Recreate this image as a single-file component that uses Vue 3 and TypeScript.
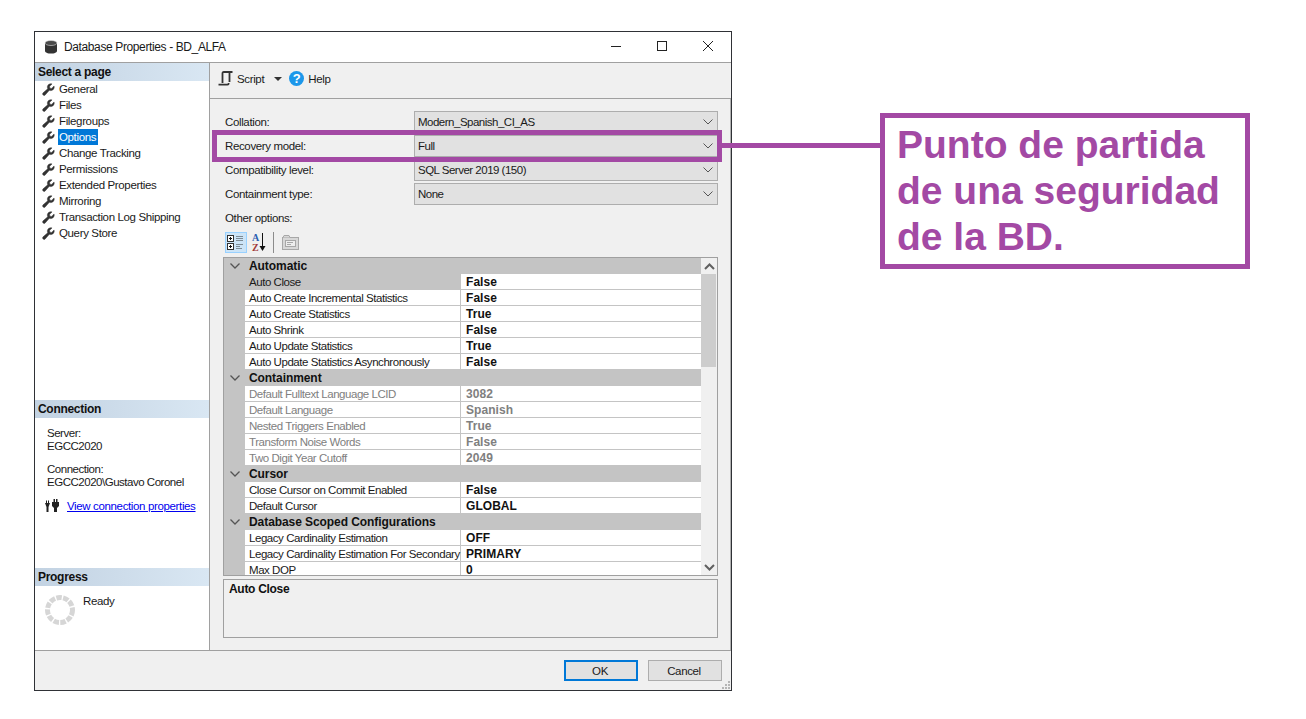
<script setup lang="ts">
interface PropRow {
  label: string
  value?: string
  cat?: boolean
  dim?: boolean
  selected?: boolean
}

const pages = [
  'General',
  'Files',
  'Filegroups',
  'Options',
  'Change Tracking',
  'Permissions',
  'Extended Properties',
  'Mirroring',
  'Transaction Log Shipping',
  'Query Store',
]

const combos = [
  { label: 'Collation:', value: 'Modern_Spanish_CI_AS' },
  { label: 'Recovery model:', value: 'Full' },
  { label: 'Compatibility level:', value: 'SQL Server 2019 (150)' },
  { label: 'Containment type:', value: 'None' },
]

const rows: PropRow[] = [
  { label: 'Automatic', cat: true },
  { label: 'Auto Close', value: 'False', selected: true },
  { label: 'Auto Create Incremental Statistics', value: 'False' },
  { label: 'Auto Create Statistics', value: 'True' },
  { label: 'Auto Shrink', value: 'False' },
  { label: 'Auto Update Statistics', value: 'True' },
  { label: 'Auto Update Statistics Asynchronously', value: 'False' },
  { label: 'Containment', cat: true },
  { label: 'Default Fulltext Language LCID', value: '3082', dim: true },
  { label: 'Default Language', value: 'Spanish', dim: true },
  { label: 'Nested Triggers Enabled', value: 'True', dim: true },
  { label: 'Transform Noise Words', value: 'False', dim: true },
  { label: 'Two Digit Year Cutoff', value: '2049', dim: true },
  { label: 'Cursor', cat: true },
  { label: 'Close Cursor on Commit Enabled', value: 'False' },
  { label: 'Default Cursor', value: 'GLOBAL' },
  { label: 'Database Scoped Configurations', cat: true },
  { label: 'Legacy Cardinality Estimation', value: 'OFF' },
  { label: 'Legacy Cardinality Estimation For Secondary', value: 'PRIMARY' },
  { label: 'Max DOP', value: '0' },
]

const wrench =
  'M13 3.2 10.4 5.8 8.4 5.6 8.2 3.6 10.8 1C8.6.2 6 1.6 5.8 4 5.7 5 6 5.6 6.2 6.2L1.2 10.6C.4 11.4.6 12.4 1.2 13 1.9 13.6 2.8 13.6 3.4 12.9L7.9 7.9C8.6 8.2 9.4 8.3 10.2 8.1 12.3 7.7 13.7 5.4 13 3.2Z'
</script>

<template>
  <div class="page">
    <div class="window">
      <header class="titlebar">
        <svg class="db-icon" width="14" height="14" viewBox="0 0 14 14">
          <path d="M1 3v8c0 1.4 2.700 2.600 6 2.600s6-1.200 6-2.600V3z" fill="#333" />
          <ellipse cx="7" cy="3" rx="6" ry="2.500" fill="#4a4a4a" stroke="#ddd" stroke-width=".6" />
        </svg>
        <span class="title">Database Properties - BD_ALFA</span>
        <div class="controls">
          <svg width="46" height="12" viewBox="0 0 46 12"><path d="M18 6.500h10" stroke="#222" fill="none" /></svg>
          <svg width="46" height="12" viewBox="0 0 46 12"><rect x="18.500" y="1.500" width="9" height="9" stroke="#222" fill="none" /></svg>
          <svg width="46" height="12" viewBox="0 0 46 12"><path d="M18 1l10 10M28 1 18 11" stroke="#222" fill="none" /></svg>
        </div>
      </header>

      <div class="body">
        <aside class="side">
          <section class="side-pages">
            <h3 class="side-head">Select a page</h3>
            <ul class="page-list">
              <li v-for="p in pages" :key="p" class="page-item">
                <svg width="13" height="13" viewBox="0 0 14 14"><path :d="wrench" fill="#333" stroke="#333" stroke-width=".5" /></svg>
                <span class="page-name" :class="{ active: p === 'Options' }">{{ p }}</span>
              </li>
            </ul>
          </section>

          <section class="side-conn">
            <h3 class="side-head">Connection</h3>
            <div class="conn-body">
              <p class="conn-text">Server:<br />EGCC2020</p>
              <p class="conn-text">Connection:<br />EGCC2020\Gustavo Coronel</p>
              <div class="conn-link-row">
                <svg width="15" height="14" viewBox="0 0 15 14" fill="#222">
                  <path d="M0 4h5L3.500 8v5h-2V8zM1 1.500h1V4H1zM3 1.500h1V4H3z" />
                  <path d="M7 3h7v4l-2 2v4h-3V9L7 7zM8.500 0H10v3H8.500zM11 0h1.500v3H11z" />
                </svg>
                <a class="conn-link" href="#">View connection properties</a>
              </div>
            </div>
          </section>

          <section class="side-progress">
            <h3 class="side-head">Progress</h3>
            <div class="progress-body">
              <svg width="32" height="32" viewBox="0 0 32 32">
                <circle cx="16" cy="16" r="12.500" fill="none" stroke="#d6d6d6" stroke-width="5" stroke-dasharray="5.500 1.354" />
              </svg>
              <span class="ready">Ready</span>
            </div>
          </section>
        </aside>

        <main class="content">
          <div class="toolbar">
            <svg width="15" height="15" viewBox="0 0 15 15" fill="none" stroke="#333" stroke-width="1.800">
              <path d="M4.500 12V2.500c0-1 .4-1.500 1.300-1.500H14.500M11.500 1.500V11" />
              <path d="M.5 13.700h9c.9 0 1.200-.6 1.200-1.700" />
            </svg>
            <span class="tb-script">Script</span>
            <span class="tb-caret"></span>
            <svg class="tb-help-icon" width="15" height="15" viewBox="0 0 15 15">
              <circle cx="7.500" cy="7.500" r="7.500" fill="#1c97ea" />
              <text x="7.500" y="12" text-anchor="middle" class="help-q">?</text>
            </svg>
            <span class="tb-help">Help</span>
          </div>

          <div class="form">
            <div v-for="c in combos" :key="c.label" class="form-row">
              <label class="form-label">{{ c.label }}</label>
              <div class="combo">
                <span>{{ c.value }}</span>
                <svg width="10" height="6" viewBox="0 0 10 6"><path d="M.5.5 5 5 9.500.5" fill="none" stroke="#555" /></svg>
              </div>
            </div>

            <div class="other-label">Other options:</div>

            <div class="grid-tools">
              <button class="tool on" type="button">
                <svg width="18" height="17" viewBox="0 0 18 17" fill="none">
                  <rect x=".5" y="1.500" width="6" height="6" fill="#fff" stroke="#333" />
                  <path d="M2 4.500h3M3.500 3v3" stroke="#111" />
                  <rect x=".5" y="9.500" width="6" height="6" fill="#fff" stroke="#333" />
                  <path d="M2 12.500h3M3.500 11v3" stroke="#111" />
                  <path d="M9 2.500h7M9 4.500h7M9 6.500h7M9 10.500h7M9 12.500h4M9 14.500h6" stroke="#7d8b95" />
                </svg>
              </button>
              <div class="tool az">
                <span class="az-letters"><span class="az-a">A</span><span class="az-z">Z</span></span>
                <svg width="7" height="19" viewBox="0 0 7 19"><path d="M3.500 0v15" stroke="#111" /><path d="M.5 13h6l-3 5z" fill="#111" /></svg>
              </div>
              <span class="tool-sep"></span>
              <div class="tool pages-tool">
                <svg width="17" height="15" viewBox="0 0 17 15">
                  <rect x=".5" y="2.500" width="16" height="12" fill="#d8d8d8" stroke="#a8a8a8" />
                  <path d="M1 2.500 2 .5h5l1 2" fill="#d8d8d8" stroke="#a8a8a8" />
                  <rect x="3.500" y="5.500" width="10" height="6" fill="#eee" stroke="#a8a8a8" />
                  <path d="M5 7.500h6M5 9.500h4" stroke="#a8a8a8" />
                </svg>
              </div>
            </div>

            <div class="grid">
              <div class="grid-rows">
                <div v-for="r in rows" :key="r.label" class="g-row" :class="{ cat: r.cat, dim: r.dim, selected: r.selected }">
                  <span class="g-gutter">
                    <svg v-if="r.cat" width="10" height="6" viewBox="0 0 10 6"><path d="M.5.5 5 5 9.500.5" fill="none" stroke="#555" stroke-width="1.300" /></svg>
                  </span>
                  <span class="g-label">{{ r.label }}</span>
                  <span v-if="!r.cat" class="g-value">{{ r.value }}</span>
                </div>
              </div>
              <div class="scrollbar">
                <span class="sb-btn">
                  <svg width="11" height="7" viewBox="0 0 11 7"><path d="M1 6 5.500 1.500 10 6" fill="none" stroke="#606060" stroke-width="2" /></svg>
                </span>
                <span class="sb-thumb"></span>
                <span class="sb-fill"></span>
                <span class="sb-btn">
                  <svg width="11" height="7" viewBox="0 0 11 7"><path d="M1 1 5.500 5.500 10 1" fill="none" stroke="#606060" stroke-width="2" /></svg>
                </span>
              </div>
            </div>

            <div class="desc">Auto Close</div>
          </div>
        </main>
      </div>

      <footer class="footer">
        <button class="btn default" type="button">OK</button>
        <button class="btn" type="button">Cancel</button>
        <svg class="grip" width="9" height="9" viewBox="0 0 9 9" fill="#b5b5b5">
          <rect x="6" y="0" width="2" height="2" />
          <rect x="3" y="3" width="2" height="2" /><rect x="6" y="3" width="2" height="2" />
          <rect x="0" y="6" width="2" height="2" /><rect x="3" y="6" width="2" height="2" /><rect x="6" y="6" width="2" height="2" />
        </svg>
      </footer>

      <div class="highlight"></div>
    </div>

    <aside class="callout">Punto de partida de una seguridad de la BD.</aside>
  </div>
</template>

<style>
html,
body {
  margin: 0;
  background: #fff;
}
</style>

<style scoped>
.page {
  display: flex;
  align-items: flex-start;
  height: 719px;
  box-sizing: border-box;
  padding: 31px 0 0 34px;
  background: #fff;
  font-family: 'Liberation Sans', Arial, sans-serif;
  font-size: 11.5px;
  letter-spacing: -0.36px;
  color: #1a1a1a;
  overflow: hidden;
}

.window {
  position: relative;
  display: flex;
  flex-direction: column;
  width: 698px;
  height: 660px;
  box-sizing: border-box;
  border: 1px solid #2f3136;
  background: #f0f0f0;
}

.titlebar {
  display: flex;
  align-items: center;
  flex: none;
  height: 31px;
  box-sizing: border-box;
  padding-left: 9px;
  background: #fff;
  border-bottom: 1px solid #a0a0a0;
}

.title {
  margin-left: 6px;
  font-size: 12px;
  letter-spacing: -0.38px;
}

.controls {
  display: flex;
  margin-left: auto;
  padding-bottom: 2px;
}

.body {
  display: flex;
  flex: 1;
  min-height: 0;
}

.side {
  display: flex;
  flex-direction: column;
  flex: none;
  width: 175px;
  box-sizing: border-box;
  background: #fff;
  border-right: 1px solid #a0a0a0;
}

.side-pages {
  flex: 1;
}

.side-conn {
  flex: none;
  height: 168px;
}

.side-progress {
  flex: none;
  height: 82px;
}

.side-head {
  margin: 0;
  height: 18px;
  padding-left: 3px;
  font-size: 12px;
  line-height: 18px;
  font-weight: 700;
  letter-spacing: -0.3px;
  color: #111;
  background: linear-gradient(90deg, #c2d2e2, #d9e7f3);
}

.page-list {
  margin: 0;
  padding: 0;
  list-style: none;
}

.page-item {
  display: flex;
  align-items: center;
  height: 16px;
  padding-left: 7px;
}

.page-name {
  margin-left: 3px;
  padding: 0 2px 0 1px;
  line-height: 16px;
}

.page-name.active {
  background: #0078d7;
  color: #fff;
}

.conn-body {
  padding: 9px 0 0 12px;
  letter-spacing: -0.48px;
}

.conn-text {
  margin: 0 0 10px;
  line-height: 13px;
}

.conn-link-row {
  display: flex;
  align-items: center;
  gap: 7px;
  margin-top: 6px;
  margin-left: -2px;
  letter-spacing: -0.36px;
}

.conn-link {
  color: #0000ee;
  text-decoration: underline;
}

.progress-body {
  display: flex;
  align-items: flex-start;
  gap: 7px;
  padding: 8px 0 0 9px;
}

.ready {
  line-height: 14px;
}

.content {
  display: flex;
  flex-direction: column;
  flex: 1;
  min-width: 0;
}

.toolbar {
  display: flex;
  align-items: center;
  flex: none;
  height: 36px;
  box-sizing: border-box;
  padding: 0 0 4px 8px;
  border-bottom: 1px solid #a0a0a0;
}

.tb-script {
  margin-left: 4px;
}

.tb-caret {
  width: 0;
  height: 0;
  margin-left: 10px;
  border-left: 4px solid transparent;
  border-right: 4px solid transparent;
  border-top: 4px solid #333;
}

.tb-help-icon {
  margin-left: 7px;
}

.help-q {
  font-size: 13px;
  font-weight: 700;
  fill: #fff;
}

.tb-help {
  margin-left: 4px;
}

.form {
  display: flex;
  flex-direction: column;
  flex: 1;
  min-height: 0;
  padding: 12px 12px 12px 13px;
  border-right: 1px solid #b0b0b0;
}

.form-row {
  display: flex;
  align-items: center;
  height: 22px;
  margin-bottom: 2px;
}

.form-label {
  flex: none;
  width: 189px;
  margin-left: 2px;
}

.combo {
  display: flex;
  align-items: center;
  justify-content: space-between;
  flex: 1;
  height: 22px;
  box-sizing: border-box;
  padding: 0 4px 0 3px;
  letter-spacing: -0.5px;
  background: #e1e1e1;
  border: 1px solid #adadad;
}

.other-label {
  margin: 3px 0 0 2px;
  height: 16px;
  line-height: 16px;
}

.grid-tools {
  display: flex;
  align-items: center;
  flex: none;
  height: 21px;
  margin: 6px 0 4px 2px;
}

.tool {
  display: flex;
  align-items: center;
  justify-content: center;
  box-sizing: border-box;
  width: 22px;
  height: 21px;
  padding: 0;
  border: 1px solid transparent;
  background: none;
}

.tool.on {
  background: #cce4f7;
  border-color: #99d1ff;
}

.az {
  gap: 0;
  margin-left: 2px;
  width: 20px;
}

.az-letters {
  display: flex;
  flex-direction: column;
  font-family: 'Liberation Serif', serif;
  font-size: 10px;
  line-height: 10px;
  font-weight: 700;
  letter-spacing: 0;
}

.az-a {
  color: #2a5db0;
}

.az-z {
  color: #a23a3a;
}

.tool-sep {
  width: 1px;
  height: 21px;
  margin: 0 5px 0 4px;
  background: #8c8c8c;
}

.grid {
  display: flex;
  flex: 1;
  min-height: 0;
  border: 1px solid #a0a0a0;
  background: #f0f0f0;
}

.grid-rows {
  flex: 1;
  min-width: 0;
  overflow: hidden;
}

.g-row {
  display: flex;
  height: 16px;
  box-sizing: border-box;
  line-height: 16px;
  background: #fff;
  border-bottom: 1px solid #c4c4c4;
}

.g-gutter {
  display: flex;
  align-items: center;
  justify-content: center;
  flex: none;
  width: 21px;
  height: 16px;
  background: #c4c4c4;
}

.g-label {
  flex: none;
  width: 216px;
  box-sizing: border-box;
  padding-left: 4px;
  white-space: nowrap;
  letter-spacing: -0.45px;
  border-right: 1px solid #c4c4c4;
}

.g-value {
  flex: 1;
  padding-left: 5px;
  font-size: 12px;
  font-weight: 700;
  letter-spacing: 0.05px;
  color: #111;
}

.cat {
  background: #c4c4c4;
}

.cat .g-label {
  width: auto;
  border-right: 0;
  font-size: 12px;
  font-weight: 700;
  letter-spacing: -0.07px;
  color: #111;
}

.selected .g-label {
  background: #c4c4c4;
}

.dim .g-label,
.dim .g-value {
  color: #808080;
}

.scrollbar {
  display: flex;
  flex-direction: column;
  flex: none;
  width: 16px;
  background: #f0f0f0;
}

.sb-btn {
  display: flex;
  align-items: center;
  justify-content: center;
  flex: none;
  height: 16px;
}

.sb-thumb {
  flex: none;
  height: 93px;
  margin-right: 1px;
  background: #cdcdcd;
}

.sb-fill {
  flex: 1;
}

.desc {
  flex: none;
  height: 59px;
  box-sizing: border-box;
  margin-top: 3px;
  padding: 2px 5px;
  font-size: 12px;
  font-weight: 700;
  letter-spacing: -0.3px;
  line-height: 14px;
  color: #111;
  border: 1px solid #a0a0a0;
}

.footer {
  position: relative;
  display: flex;
  align-items: flex-start;
  justify-content: flex-end;
  gap: 10px;
  flex: none;
  height: 40px;
  box-sizing: border-box;
  padding: 9px 9px 0 0;
  border-top: 1px solid #a0a0a0;
}

.btn {
  width: 74px;
  height: 21px;
  padding: 0 2px 0 0;
  font: inherit;
  letter-spacing: inherit;
  color: #1a1a1a;
  background: #e1e1e1;
  border: 1px solid #adadad;
}

.btn.default {
  border: 2px solid #0078d7;
}

.grip {
  position: absolute;
  right: 0;
  bottom: 0;
}

.highlight {
  position: absolute;
  left: 177px;
  top: 98px;
  width: 510px;
  height: 32px;
  box-sizing: border-box;
  border: 5px solid #a349a4;
  pointer-events: none;
}

.callout {
  position: relative;
  flex: none;
  width: 370px;
  height: 156px;
  box-sizing: border-box;
  margin: 82px 0 0 148px;
  padding: 4px 10px 0 12px;
  font-size: 39px;
  line-height: 46px;
  font-weight: 700;
  letter-spacing: 0;
  color: #a349a4;
  background: #fff;
  border: 5px solid #a349a4;
}

.callout::before {
  content: '';
  position: absolute;
  left: -163px;
  top: 25px;
  width: 158px;
  height: 5px;
  background: #a349a4;
}
</style>
